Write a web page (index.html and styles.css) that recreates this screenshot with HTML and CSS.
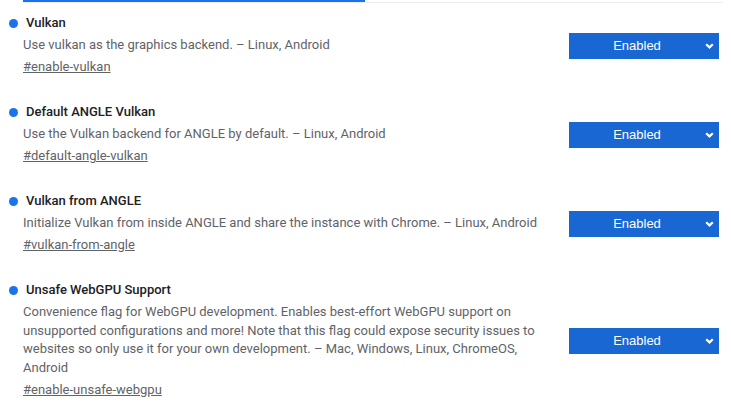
FILE: index.html
```html
<!DOCTYPE html>
<html>
<head>
<meta charset="utf-8">
<link rel="stylesheet" href="styles.css">
</head>
<body>
<div class="tabs"><div class="tab-active"></div></div>
<div class="list">
  <div class="experiment">
    <div class="exp-text">
      <div class="exp-name"><span class="dot"></span>Vulkan</div>
      <p class="desc">Use vulkan as the graphics backend. – Linux, Android</p>
      <a class="permalink">#enable-vulkan</a>
    </div>
    <div class="select"><span class="select-label">Enabled</span><svg class="chev" viewBox="0 0 9 6" width="9" height="6"><path d="M1.2 1.2 L4.5 4.4 L7.8 1.2" fill="none" stroke="#fff" stroke-width="2.2"/></svg></div>
  </div>
  <div class="experiment">
    <div class="exp-text">
      <div class="exp-name"><span class="dot"></span>Default ANGLE Vulkan</div>
      <p class="desc">Use the Vulkan backend for ANGLE by default. – Linux, Android</p>
      <a class="permalink">#default-angle-vulkan</a>
    </div>
    <div class="select"><span class="select-label">Enabled</span><svg class="chev" viewBox="0 0 9 6" width="9" height="6"><path d="M1.2 1.2 L4.5 4.4 L7.8 1.2" fill="none" stroke="#fff" stroke-width="2.2"/></svg></div>
  </div>
  <div class="experiment">
    <div class="exp-text">
      <div class="exp-name"><span class="dot"></span>Vulkan from ANGLE</div>
      <p class="desc">Initialize Vulkan from inside ANGLE and share the instance with Chrome. – Linux, Android</p>
      <a class="permalink">#vulkan-from-angle</a>
    </div>
    <div class="select"><span class="select-label">Enabled</span><svg class="chev" viewBox="0 0 9 6" width="9" height="6"><path d="M1.2 1.2 L4.5 4.4 L7.8 1.2" fill="none" stroke="#fff" stroke-width="2.2"/></svg></div>
  </div>
  <div class="experiment">
    <div class="exp-text">
      <div class="exp-name"><span class="dot"></span>Unsafe WebGPU Support</div>
      <p class="desc">Convenience flag for WebGPU development. Enables best-effort WebGPU support on unsupported configurations and more! Note that this flag could expose security issues to websites so only use it for your own development. – Mac, Windows, Linux, ChromeOS, Android</p>
      <a class="permalink">#enable-unsafe-webgpu</a>
    </div>
    <div class="select"><span class="select-label">Enabled</span><svg class="chev" viewBox="0 0 9 6" width="9" height="6"><path d="M1.2 1.2 L4.5 4.4 L7.8 1.2" fill="none" stroke="#fff" stroke-width="2.2"/></svg></div>
  </div>
</div>
</body>
</html>
```
FILE: styles.css
```css
html, body {
  margin: 0;
  padding: 0;
  background: #fff;
}
body {
  font-family: Roboto, "Noto Sans", sans-serif;
  font-size: 13px;
  color: #202124;
  width: 731px;
  overflow: hidden;
}
.tabs {
  margin-left: 23px;
  width: 700px;
  height: 2px;
  border-bottom: 1px solid #ececec;
  display: flex;
}
.tab-active {
  width: 342px;
  height: 2px;
  background: #1a73e8;
}
.experiment {
  display: flex;
  align-items: center;
  padding: 10px 12px 15.6px 9px;
}
.exp-text {
  flex: 1;
  min-width: 0;
  display: flex;
  flex-direction: column;
  align-items: flex-start;
}
.exp-name {
  display: flex;
  align-items: center;
  gap: 8px;
  font-weight: 500;
  line-height: 20px;
  color: #202124;
}
.dot {
  width: 9px;
  height: 9px;
  border-radius: 50%;
  background: #1a73e8;
  flex: none;
}
.desc {
  margin: 3px 0 0 14px;
  line-height: 18.5px;
  color: #5f6368;
}
.permalink {
  margin: 3.5px 0 0 14px;
  line-height: 18.5px;
  color: #5f6368;
  text-decoration: underline;
}
.select {
  flex: none;
  width: 150px;
  height: 26px;
  box-sizing: border-box;
  margin: 1.5px 0 0 30px;
  padding: 0 5px 0 6px;
  background: #1967d2;
  display: flex;
  align-items: center;
  gap: 6px;
  font-family: "Liberation Sans", Arial, sans-serif;
  font-size: 13px;
  color: #fff;
}
.select-label {
  flex: 1;
  text-align: center;
}
.chev {
  display: block;
  flex: none;
}
```
